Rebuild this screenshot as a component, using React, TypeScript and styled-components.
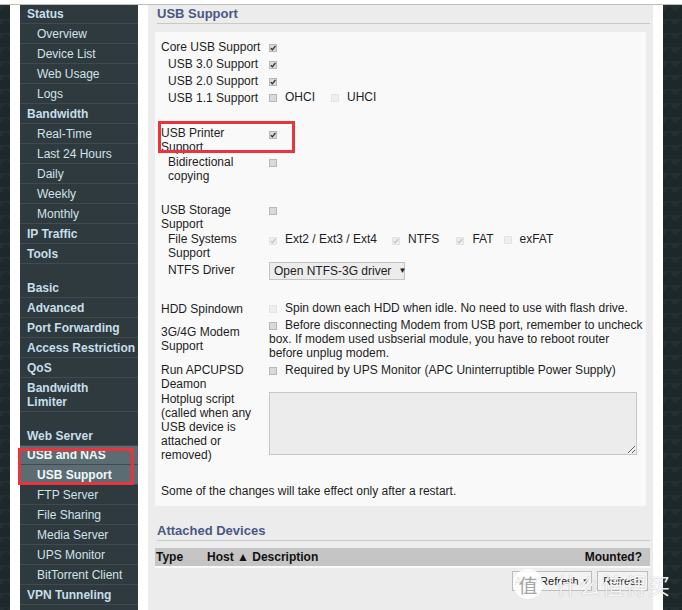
import React from "react";
import styled, { createGlobalStyle } from "styled-components";

const Global = createGlobalStyle`
  html, body { margin: 0; padding: 0; overflow: hidden; background: #fff; }
  body { font-family: "Liberation Sans", Arial, sans-serif; font-size: 12px; color: #1e1e1e; }
  * { box-sizing: border-box; }
`;

const Page = styled.div`
  position: relative;
  width: 682px;
  height: 610px;
  overflow: hidden;
  padding-top: 4px;
`;

const Frame = styled.div`
  display: flex;
  height: 100%;
  border-top: 1px solid #bdbdbd;
`;

const Backdrop = styled.div<{ $w: number; $ml?: number }>`
  flex: none;
  width: ${(p) => p.$w}px;
  margin-left: ${(p) => p.$ml || 0}px;
  background-color: #1d282b;
  background-image: linear-gradient(135deg, rgba(255,255,255,0.03) 25%, transparent 25%),
    linear-gradient(225deg, rgba(255,255,255,0.03) 25%, transparent 25%);
  background-size: 12px 14px;
`;

const Sidebar = styled.nav`
  flex: none;
  width: 118px;
  margin-left: 10px;
  background: #2f3a3e;
`;

const NavItem = styled.div<{ $sub?: boolean; $gap?: boolean; $active?: boolean }>`
  padding: ${(p) => (p.$gap ? "17px" : "3px")} 0 2px ${(p) => (p.$sub ? "17px" : "7px")};
  line-height: 14px;
  white-space: nowrap;
  border-bottom: 1px solid #3f4b50;
  font-weight: ${(p) => (p.$sub && !p.$active ? 400 : 700)};
  color: ${(p) => (p.$active ? "#f2f7f9" : p.$sub ? "#cfe2ea" : "#c6dfeb")};
  background: ${(p) => (p.$active ? "#5b6d73" : "transparent")};
  &:first-child { padding-top: 2px; }
`;

const ActiveGroup = styled.div`
  position: relative;
`;

const RedBox = styled.div<{ $l: number; $t: number; $w: number; $h: number }>`
  position: absolute;
  left: ${(p) => p.$l}px;
  top: ${(p) => p.$t}px;
  width: ${(p) => p.$w}px;
  height: ${(p) => p.$h}px;
  border: 3px solid #e8343c;
  pointer-events: none;
`;

const Main = styled.main`
  flex: none;
  width: 505px;
  margin-left: 10px;
  background: #ececec;
  padding: 0 3px 0 7px;
`;

const SectionTitle = styled.div<{ $mt?: number }>`
  margin: ${(p) => p.$mt || 0}px 0 0 2px;
  padding: 1px 0 1px 0;
  line-height: 16px;
  font-size: 13px;
  font-weight: 700;
  color: #4a5885;
  border-bottom: 1px solid #c9c9c9;
`;

const Panel = styled.section`
  margin: 8px 4px 0 0;
  background: #f9f9f9;
  padding: 6px 6px 8px 6px;
`;

const Row = styled.div`
  position: relative;
  display: grid;
  grid-template-columns: 108px 1fr;
  min-height: 17px;
  padding: 0.5px 0;
  line-height: 14px;
`;

const Label = styled.div<{ $indent?: boolean }>`
  align-self: center;
  padding-left: ${(p) => (p.$indent ? 7 : 0)}px;
  padding-right: 6px;
`;

const Value = styled.div`
  align-self: start;
  white-space: nowrap;
`;

const Spacer = styled.div<{ $h: number }>`
  height: ${(p) => p.$h}px;
`;

const Box = styled.span<{ $off?: boolean }>`
  display: inline-flex;
  align-items: center;
  justify-content: center;
  width: 8px;
  height: 8px;
  vertical-align: -1px;
  margin-right: 8px;
  border: 1px solid ${(p) => (p.$off ? "#e4e4e4" : "#b8b8b8")};
  background: ${(p) => (p.$off ? "#eeeeee" : "#d9d9d9")};
  color: ${(p) => (p.$off ? "#c4c4c4" : "#333")};
`;

const Opt = styled.span<{ $gap?: number }>`
  margin-right: ${(p) => p.$gap || 0}px;
`;

const FakeSelect = styled.span`
  display: inline-flex;
  align-items: center;
  width: 136px;
  height: 18px;
  margin-top: 1px;
  padding: 0 4px;
  border: 1px solid #c3c3c3;
  background: #ececec;
  color: #222;
`;

const Arrow = styled.span<{ $ml?: number }>`
  font-size: 8px;
  margin-left: ${(p) => (p.$ml === undefined ? 7 : p.$ml)}px;
`;

const Script = styled.textarea`
  display: block;
  width: 368px;
  height: 63px;
  margin: 0;
  background: #ececec;
  border: 1px solid #c6c6c6;
  font: inherit;
`;

const Note = styled.div`
  line-height: 14px;
`;

const TableHead = styled.div`
  display: flex;
  align-items: center;
  height: 20px;
  margin-top: 7px;
  background: #c5c5c5;
  border-bottom: 2px solid #fafafa;
  font-weight: 700;
  color: #111;
  padding: 0 8px 0 1px;
`;

const Col = styled.span<{ $w?: number; $grow?: boolean }>`
  width: ${(p) => (p.$w ? `${p.$w}px` : "auto")};
  flex: ${(p) => (p.$grow ? 1 : "none")};
`;

const Controls = styled.div`
  display: flex;
  justify-content: flex-end;
  gap: 5px;
  margin: 3px 2px 0 0;
`;

const Ctl = styled.span<{ $w: number }>`
  display: inline-flex;
  align-items: center;
  justify-content: center;
  width: ${(p) => p.$w}px;
  height: 20px;
  padding: 0 2px;
  white-space: nowrap;
  font-size: 11px;
  border: 1px solid #bdbdbd;
  background: #f3f3f3;
`;

const Watermark = styled.div`
  position: absolute;
  left: 513px;
  top: 568px;
  display: flex;
  align-items: center;
  gap: 13px;
  pointer-events: none;
`;

const WmBadge = styled.div`
  width: 30px;
  height: 30px;
  border-radius: 50%;
  background: rgba(255, 255, 255, 0.88);
  color: #a5a5a5;
  font: 400 19px "Noto Sans CJK SC", sans-serif;
  display: flex;
  align-items: center;
  justify-content: center;
`;

const WmText = styled.div`
  font: 400 22px "Noto Sans CJK SC", sans-serif;
  letter-spacing: 1px;
  color: rgba(255, 255, 255, 0.93);
  text-shadow: 0 0 1px rgba(0, 0, 0, 0.35);
`;

const Tick = () => (
  <svg width="6" height="6" viewBox="0 0 6 6">
    <path d="M0.8 3.2 L2.4 4.8 L5.4 1" fill="none" stroke="currentColor" strokeWidth="1.3" />
  </svg>
);

const Check = ({ on, off }: { on?: boolean; off?: boolean }) => (
  <Box $off={off}>{on ? <Tick /> : null}</Box>
);

type Nav = { label: React.ReactNode; sub?: boolean; gap?: boolean };

const navBefore: Nav[] = [
  { label: "Status" },
  { label: "Overview", sub: true },
  { label: "Device List", sub: true },
  { label: "Web Usage", sub: true },
  { label: "Logs", sub: true },
  { label: "Bandwidth" },
  { label: "Real-Time", sub: true },
  { label: "Last 24 Hours", sub: true },
  { label: "Daily", sub: true },
  { label: "Weekly", sub: true },
  { label: "Monthly", sub: true },
  { label: "IP Traffic" },
  { label: "Tools" },
  { label: "Basic", gap: true },
  { label: "Advanced" },
  { label: "Port Forwarding" },
  { label: "Access Restriction" },
  { label: "QoS" },
  { label: <>Bandwidth<br />Limiter</> },
  { label: "Web Server", gap: true },
];

const navAfter: Nav[] = [
  { label: "FTP Server", sub: true },
  { label: "File Sharing", sub: true },
  { label: "Media Server", sub: true },
  { label: "UPS Monitor", sub: true },
  { label: "BitTorrent Client", sub: true },
  { label: "VPN Tunneling" },
];

export default function App() {
  return (
    <Page>
      <Global />
      <Frame>
        <Backdrop $w={10} />
        <Sidebar>
          {navBefore.map((n, i) => (
            <NavItem key={i} $sub={n.sub} $gap={n.gap}>{n.label}</NavItem>
          ))}
          <ActiveGroup>
            <NavItem $active>USB and NAS</NavItem>
            <NavItem $active $sub>USB Support</NavItem>
            <RedBox $l={-2} $t={2} $w={116} $h={37} />
          </ActiveGroup>
          {navAfter.map((n, i) => (
            <NavItem key={i} $sub={n.sub}>{n.label}</NavItem>
          ))}
        </Sidebar>
        <Main>
          <SectionTitle>USB Support</SectionTitle>
          <Panel>
            <Row><Label>Core USB Support</Label><Value><Check on /></Value></Row>
            <Row><Label $indent>USB 3.0 Support</Label><Value><Check on /></Value></Row>
            <Row><Label $indent>USB 2.0 Support</Label><Value><Check on /></Value></Row>
            <Row>
              <Label $indent>USB 1.1 Support</Label>
              <Value><Check /><Opt $gap={16}>OHCI</Opt><Check off /><Opt>UHCI</Opt></Value>
            </Row>
            <Spacer $h={19} />
            <Row>
              <Label>USB Printer Support</Label>
              <Value><Check on /></Value>
              <RedBox $l={-3} $t={-4} $w={137} $h={32} />
            </Row>
            <Row><Label $indent>Bidirectional copying</Label><Value><Check /></Value></Row>
            <Spacer $h={19} />
            <Row><Label>USB Storage Support</Label><Value><Check /></Value></Row>
            <Row>
              <Label $indent>File Systems Support</Label>
              <Value>
                <Check on off /><Opt $gap={15}>Ext2 / Ext3 / Ext4</Opt>
                <Check on off /><Opt $gap={17}>NTFS</Opt>
                <Check on off /><Opt $gap={10}>FAT</Opt>
                <Check off /><Opt>exFAT</Opt>
              </Value>
            </Row>
            <Row>
              <Label $indent>NTFS Driver</Label>
              <Value><FakeSelect>Open NTFS-3G driver<Arrow>▼</Arrow></FakeSelect></Value>
            </Row>
            <Spacer $h={20} />
            <Row>
              <Label>HDD Spindown</Label>
              <Value><Check off />Spin down each HDD when idle. No need to use with flash drive.</Value>
            </Row>
            <Row>
              <Label>3G/4G Modem Support</Label>
              <Value>
                <Check />Before disconnecting Modem from USB port, remember to uncheck<br />
                box. If modem used usbserial module, you have to reboot router<br />
                before unplug modem.
              </Value>
            </Row>
            <Spacer $h={2} />
            <Row>
              <Label>Run APCUPSD Deamon</Label>
              <Value><Check />Required by UPS Monitor (APC Uninterruptible Power Supply)</Value>
            </Row>
            <Row>
              <Label>Hotplug script (called when any USB device is attached or removed)</Label>
              <Value><Script defaultValue="" /></Value>
            </Row>
            <Spacer $h={22} />
            <Note>Some of the changes will take effect only after a restart.</Note>
          </Panel>
          <SectionTitle $mt={16}>Attached Devices</SectionTitle>
          <TableHead>
            <Col $w={51}>Type</Col>
            <Col $grow>Host ▲ Description</Col>
            <Col>Mounted?</Col>
          </TableHead>
          <Controls>
            <Ctl $w={80}>Auto Refresh<Arrow $ml={3}>▼</Arrow></Ctl>
            <Ctl $w={51}>Refresh</Ctl>
          </Controls>
        </Main>
        <Backdrop $w={19} $ml={10} />
      </Frame>
      <Watermark>
        <WmBadge>值</WmBadge>
        <WmText>什么值得买</WmText>
      </Watermark>
    </Page>
  );
}
